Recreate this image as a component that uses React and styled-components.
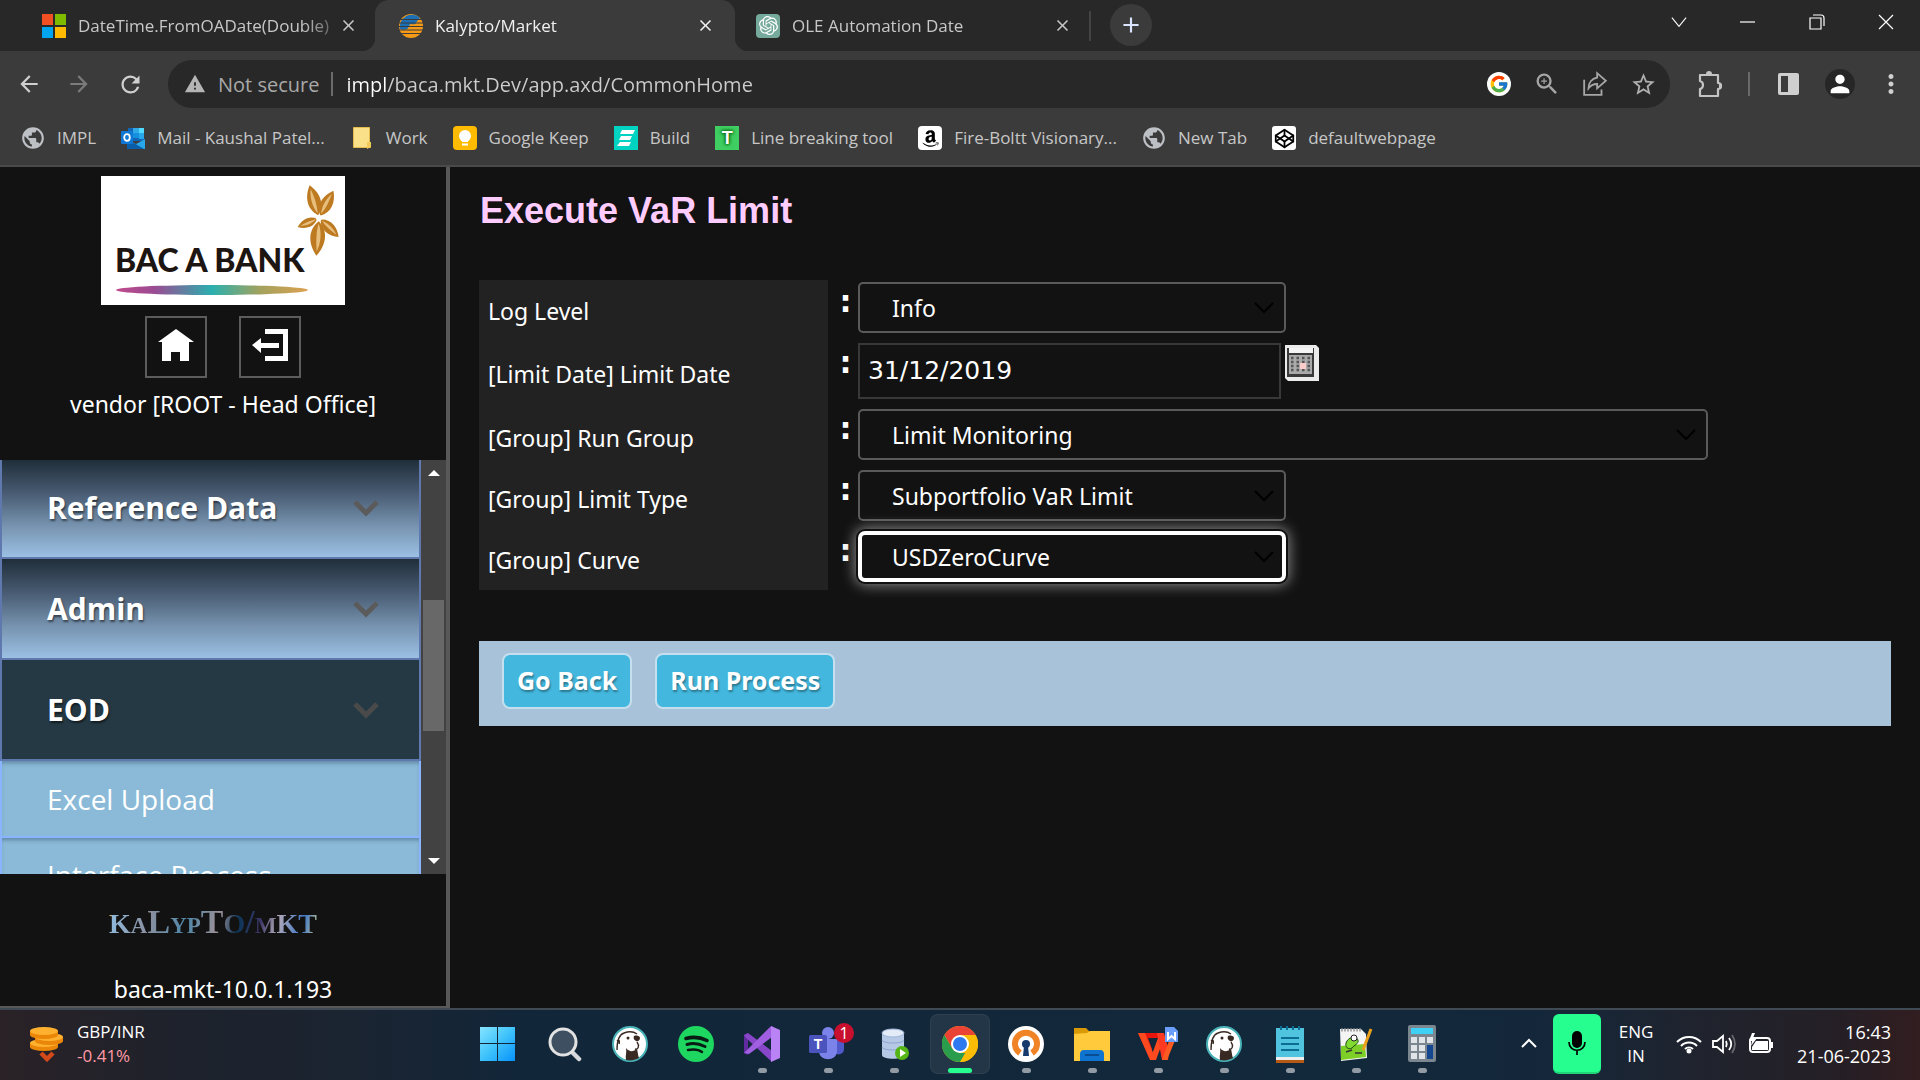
import React from "react";
import styled, { createGlobalStyle, css } from "styled-components";
import {
  MdArrowBack, MdArrowForward, MdRefresh, MdWarning, MdZoomIn, MdStarBorder,
  MdPublic, MdPerson, MdMoreVert, MdClose, MdAdd,
} from "react-icons/md";
import { SiOpenai } from "react-icons/si";
import { FcGoogle } from "react-icons/fc";
import { FaAmazon } from "react-icons/fa";
import { FiCodepen } from "react-icons/fi";

const ui = `"Open Sans", "Noto Sans", sans-serif`;
const app = `"Noto Sans", "Open Sans", sans-serif`;

const GlobalStyle = createGlobalStyle`
  * { box-sizing: border-box; }
  body { margin: 0; background: #121212; overflow: hidden; }
  button, input, select { font: inherit; color: inherit; margin: 0; }
  button { cursor: pointer; }
  svg { display: block; flex: none; }
`;

const Screen = styled.div`
  height: 100vh;
  display: flex;
  flex-direction: column;
  font-family: ${ui};
  color: #fff;
`;

const plainButton = css`
  border: 0;
  padding: 0;
  background: none;
  display: flex;
  align-items: center;
  justify-content: center;
`;

/* ---------- browser ---------- */

const Browser = styled.header`
  background: #3b3b3b;
  border-bottom: 2px solid #4a4a4a;
  color: #c7c7c7;
`;

const TabStrip = styled.div`
  display: flex;
  height: 51px;
  padding-left: 18px;
  background: #282828;
`;

const Tab = styled.div`
  position: relative;
  display: flex;
  align-items: center;
  gap: 12px;
  width: 357px;
  padding: 0 15px 0 24px;
  font-size: 17px;
  ${(p) => p.$active && css`
    width: 360px;
    padding-right: 18px;
    background: #3b3b3b;
    color: #f0f0f0;
    border-radius: 14px 14px 0 0;
    &::before, &::after {
      content: "";
      position: absolute;
      bottom: 0;
      width: 14px;
      height: 14px;
    }
    &::before { left: -14px; background: radial-gradient(circle at 0 0, #282828 14px, #3b3b3b 15px); }
    &::after { right: -14px; background: radial-gradient(circle at 100% 0, #282828 14px, #3b3b3b 15px); }
  `}
  ${(p) => p.$last && css`
    width: 354px;
    padding-left: 21px;
  `}
`;

const TabTitle = styled.span`
  flex: 1;
  min-width: 0;
  margin-right: -10px;
  overflow: hidden;
  white-space: nowrap;
  mask-image: linear-gradient(90deg, #000 88%, rgba(0, 0, 0, 0.3));
`;

const TabClose = styled.button`
  ${plainButton}
  width: 24px;
  height: 24px;
`;

const NewTab = styled.button`
  ${plainButton}
  width: 42px;
  height: 42px;
  margin: 4px 0 0 19px;
  border-radius: 50%;
  background: #3b3b3b;
  color: #dbe4ff;
`;

const TabDivider = styled.i`
  width: 2px;
  height: 30px;
  margin-top: 11px;
  background: #444;
`;

const WindowButtons = styled.div`
  display: flex;
  margin-left: auto;
`;

const WindowButton = styled.button`
  ${plainButton}
  width: 69px;
  height: 43px;
  color: #fff;
`;

const Toolbar = styled.div`
  display: flex;
  align-items: center;
  height: 66px;
  padding: 0 4px;
`;

const ToolButton = styled.button`
  ${plainButton}
  width: ${(p) => p.$w || 50}px;
  height: 48px;
  color: ${(p) => (p.$dim ? "#7b7b7b" : "#d0d0d0")};
`;

const AddressBar = styled.div`
  flex: 1;
  display: flex;
  align-items: center;
  height: 48px;
  margin: 0 14px 0 12px;
  padding: 0 3px 0 16px;
  border-radius: 24px;
  background: #282828;
  font-size: 20px;
`;

const Security = styled.span`
  margin-left: 12px;
  padding-right: 12px;
  color: #a9a9a9;
`;

const AddressInput = styled.input`
  flex: 1;
  min-width: 0;
  border: 0;
  outline: 0;
  padding: 0;
  margin-left: 13px;
  background: linear-gradient(90deg, #fff 40px, #cdcdcd 40px);
  background-clip: text;
  -webkit-text-fill-color: transparent;
`;

const Rule = styled.i`
  width: 2px;
  height: 24px;
  background: #6a6a6a;
`;

const Avatar = styled.span`
  display: flex;
  align-items: center;
  justify-content: center;
  width: 30px;
  height: 30px;
  border-radius: 50%;
  background: #262626;
  color: #fff;
`;

const Bookmarks = styled.nav`
  display: flex;
  align-items: center;
  gap: 1px;
  height: 48px;
  padding: 0 9px 6px;
`;

const Bookmark = styled.a`
  display: flex;
  align-items: center;
  gap: 12px;
  padding: 0 12px;
  color: #c7c7c7;
  font-size: 17px;
  line-height: 24px;
  text-decoration: none;
  white-space: nowrap;
`;

const Favicon = styled.span`
  display: flex;
  align-items: center;
  justify-content: center;
  width: 24px;
  height: 24px;
  border-radius: ${(p) => p.$radius || 0}px;
  background: ${(p) => p.$bg || "none"};
  color: ${(p) => p.$color || "#000"};
  font: 700 18px "Liberation Sans", sans-serif;
  text-shadow: ${(p) => p.$shadow || "none"};
`;

/* ---------- side bar ---------- */

const Body = styled.div`
  flex: 1;
  min-height: 0;
  display: flex;
  background: #121212;
  font-family: ${app};
  font-size: 23px;
`;

const Sidebar = styled.aside`
  flex: none;
  width: 450px;
  display: flex;
  flex-direction: column;
  border-right: 4px solid #585858;
  border-bottom: 2px solid #585858;
`;

const Account = styled.div`
  display: flex;
  flex-direction: column;
  align-items: center;
  height: 293px;
  padding-top: 9px;
`;

const BankLogo = styled.div`
  position: relative;
  width: 244px;
  height: 129px;
  background: #fff;
`;

const BankArt = styled.svg`
  position: absolute;
  inset: 0;
`;

const BankName = styled.span`
  position: absolute;
  left: 14px;
  top: 62px;
  color: #1d1512;
  font: 900 32px/44px Lato, "Liberation Sans", sans-serif;
  white-space: nowrap;
`;

const QuickLinks = styled.div`
  display: flex;
  gap: 32px;
  margin: 11px 0 10px;
`;

const QuickButton = styled.button`
  ${plainButton}
  width: 62px;
  height: 62px;
  padding-bottom: 4px;
  border: 2px solid #5c5c5c;
`;

const AccountName = styled.div`
  line-height: 32px;
  white-space: nowrap;
`;

const MenuArea = styled.div`
  flex: 1;
  min-height: 0;
  display: flex;
`;

const Menu = styled.nav`
  flex: 1;
  overflow: hidden;
`;

const MenuHead = styled.button`
  display: flex;
  align-items: center;
  justify-content: space-between;
  width: 100%;
  height: ${(p) => (p.$first ? 99 : 101)}px;
  padding: 0 40px ${(p) => (p.$first ? 2 : 0)}px 45px;
  border: 2px solid #5f79ae;
  border-top: 0;
  background: ${(p) => (p.$open ? "#253944" : "linear-gradient(#202e3a, #485b72 34%, #7793af 68%, #9bc0e4)")};
  color: ${(p) => (p.$open ? "#4a4a4a" : "#5b5b5b")};
  font-family: ${ui};
  font-size: 30px;
  font-weight: 700;
`;

const MenuLabel = styled.span`
  color: #fff;
  text-shadow: 1px 2px 2px rgba(0, 0, 0, 0.5);
`;

const MenuLink = styled.a`
  display: flex;
  align-items: center;
  height: ${(p) => (p.$first ? 77 : 76)}px;
  padding-left: 45px;
  border: 2px solid #8ab4ff;
  border-top: 0;
  background: #8abad7;
  box-shadow: inset 0 4px 4px -2px rgba(50, 80, 110, 0.5);
  color: #fff;
  font-family: ${ui};
  font-size: 28px;
  text-decoration: none;
`;

const ScrollTrack = styled.div`
  display: flex;
  flex-direction: column;
  align-items: center;
  width: 25px;
  padding: 10px 0;
  background: #424242;
`;

const ScrollThumb = styled.div`
  width: 21px;
  height: 131px;
  margin: 124px 0 auto;
  background: #686868;
`;

const Product = styled.footer`
  display: flex;
  flex-direction: column;
  align-items: center;
  height: 132px;
  padding-top: 26px;
  line-height: 32px;
`;

const Wordmark = styled.div`
  display: flex;
  align-items: baseline;
  height: 44px;
  margin: 0 20px 29px 0;
  background: linear-gradient(100deg, #ffb020 1%, #8fb8d8 3%, #8a8fa0 20%, #4f87a8 38%, #9b9098 52%, #0d3558 62%, #3b3565 72%, #b0a8b8 80%, #3f78c8 92%, #cfc98a);
  background-clip: text;
  color: transparent;
  font: 700 28px/44px "Liberation Serif", serif;
`;

const Letter = styled.span`
  font-size: ${(p) => (p.$size === "l" ? 34 : p.$size === "s" ? 23 : 28)}px;
`;

/* ---------- main form ---------- */

const Main = styled.main`
  flex: 1;
  min-width: 0;
  padding: 20px 29px;
`;

const Title = styled.h1`
  margin: 0 0 46px;
  padding-left: 1px;
  color: #ffccff;
  font: 700 36px/47px "Liberation Sans", Arial, sans-serif;
`;

const FormRow = styled.div`
  display: flex;
  height: ${(p) => (p.$tall ? 66 : 61)}px;
`;

const Label = styled.label`
  display: flex;
  align-items: center;
  width: 349px;
  padding-left: 9px;
  background: #222;
`;

const Colon = styled.b`
  width: 30px;
  padding: 6px 0 0 5px;
  text-align: center;
  font: 700 30px/32px "DejaVu Sans", sans-serif;
`;

const SelectBox = styled.div`
  position: relative;
  width: ${(p) => (p.$wide ? 850 : 428)}px;
  height: 51px;
  margin-top: 2px;
`;

const Select = styled.select`
  appearance: none;
  width: 100%;
  height: 100%;
  padding: 0 60px 0 32px;
  border: 2px solid #5a5a5a;
  border-radius: 5px;
  outline: 0;
  background: #121212;
  ${(p) => p.$focused && css`
    padding: 0 60px 0 30px;
    border: 4px solid #fff;
    border-radius: 7px;
    box-shadow: 0 0 0 2px #101010, 0 0 14px 3px #8a8a8a;
  `}
`;

const SelectArrow = styled.svg`
  position: absolute;
  right: 12px;
  top: 20px;
  pointer-events: none;
`;

const DateInput = styled.input`
  width: 423px;
  height: 56px;
  margin-top: 2px;
  padding: 0 8px 2px;
  border: 2px solid #383838;
  outline: 0;
  background: #121212;
  font-family: "DejaVu Sans", sans-serif;
  font-size: 25px;
`;

const CalendarButton = styled.button`
  ${plainButton}
  width: 34px;
  height: 36px;
  margin: 4px 0 0 4px;
`;

const Actions = styled.div`
  display: flex;
  gap: 23px;
  height: 85px;
  margin-top: 51px;
  padding: 12px 23px;
  background: #a8c2d9;
`;

const ActionButton = styled.button`
  height: 56px;
  padding: 0 13px 2px;
  border: 2px solid #c5dfee;
  border-radius: 8px;
  background: #43b7dd;
  font-size: 25px;
  font-weight: 700;
  text-shadow: 1px 2px 2px rgba(0, 0, 0, 0.35);
  white-space: nowrap;
`;

/* ---------- task bar ---------- */

const Taskbar = styled.footer`
  display: grid;
  grid-template-columns: 1fr auto 1fr;
  height: 72px;
  border-top: 2px solid #3f4a54;
  background: linear-gradient(90deg, #2a2227, #1d222c 10%, #1b2431 18%, #122639 27%, #12283b 70%, #14273a 80%, #20232d 89%, #251f25 96%, #321d20);
  font-size: 17px;
  line-height: 24px;
`;

const Widget = styled.button`
  ${plainButton}
  justify-content: flex-start;
  gap: 12px;
  padding: 0 0 3px 29px;
  text-align: left;
`;

const Fall = styled.div`
  color: #ff99a4;
`;

const Dock = styled.div`
  display: flex;
  align-items: center;
  gap: 6px;
`;

const DockButton = styled.button`
  ${plainButton}
  position: relative;
  width: 60px;
  height: 60px;
  border-radius: 8px;
  margin-bottom: 2px;
  ${(p) => p.$state === "active" && css`
    background: #233647;
    box-shadow: inset 0 0 0 1px #2e4050;
  `}
  ${(p) => p.$state && css`
    &::after {
      content: "";
      position: absolute;
      bottom: 1px;
      width: ${p.$state === "active" ? 24 : 9}px;
      height: 5px;
      border-radius: 3px;
      background: ${p.$state === "active" ? "#26ff8f" : "#929ba4"};
    }
  `}
`;

const Tray = styled.div`
  display: flex;
  align-items: center;
  justify-content: flex-end;
  padding: 0 29px 2px 0;
`;

const TrayButton = styled.button`
  ${plainButton}
  width: ${(p) => p.$w}px;
  height: 60px;
`;

const MicButton = styled.button`
  ${plainButton}
  width: 48px;
  height: 60px;
  border-radius: 6px;
  background: #26ff8f;
  border-bottom: 2px solid #20d478;
`;

const Clock = styled.div`
  width: 112px;
  font-size: 18px;
  text-align: right;
  white-space: nowrap;
`;

/* ---------- drawings ---------- */

const MicrosoftLogo = () => (
  <svg width="24" height="24"><path fill="#f25022" d="M0 0h11v11H0z" /><path fill="#7fba00" d="M13 0h11v11H13z" /><path fill="#00a4ef" d="M0 13h11v11H0z" /><path fill="#ffb900" d="M13 13h11v11H13z" /></svg>
);

const KalyptoLogo = () => (
  <svg width="24" height="24" viewBox="0 0 24 24">
    <circle cx="12" cy="12" r="12" fill="#f59a17" />
    <path fill="#1b6fb5" d="M1 15a12 12 0 0 1 20-11c-2 2-3 3-4 5s-3 1-5 1-2 4-4 5-5 1-7 0z" />
    <path stroke="#3b3b3b" strokeWidth="1" d="M0 5.500h24M0 9h24M0 12.500h24M0 16h24M0 19.500h24" />
  </svg>
);

const OutlookLogo = () => (
  <svg width="24" height="24" viewBox="0 0 24 24">
    <path fill="#1066b8" d="M7 2h16v13H7z" /><path fill="#32a9e7" d="M12 2h6v5h-6z" /><path fill="#50d9ff" d="M18 2h5v5h-5z" />
    <path fill="#1490df" d="M12 7h6v5h-6z" /><path fill="#28a8ea" d="M18 7h5v6h-5zM6 13l9 5 9-5v10H6z" /><path fill="#0a5ea8" d="M6 13l17 10H6z" />
    <rect y="5" width="12" height="13" rx="1" fill="#0f78d4" /><ellipse cx="6" cy="11.500" rx="2.800" ry="3.300" fill="none" stroke="#fff" strokeWidth="1.800" />
  </svg>
);

const NoteFolder = () => (
  <svg width="24" height="24"><path fill="#fbe08a" stroke="#e5bd4f" d="M3.500 1.500h16v15l1 1v4h-17z" /><path fill="#f0c95a" d="M17 16h4v5l-4 2z" /></svg>
);

const KeepLogo = () => (
  <svg width="24" height="24"><rect width="24" height="24" rx="4" fill="#fb0" /><circle cx="12" cy="10" r="6" fill="#fff" /><path fill="#fff" d="M9 13h6v3H9zM9 17.500h6v2H9z" /></svg>
);

const BuildLogo = () => (
  <svg width="24" height="24"><path fill="#00d3c2" d="M0 0h24v24H0z" /><path fill="#fff" d="M8 4h13l-2 4H6zM7 10h11l-2 4H5zM6 16h11l-2 4H3z" /></svg>
);

const ShareIcon = () => (
  <svg width="26" height="26" viewBox="0 0 24 24" fill="none" stroke="#a6a6a6" strokeWidth="1.700"><path d="M2 8v14h16v-5M14 6V2l8 7-8 7v-4c-4 0-6 1-8 4 0-5 3-9 8-10z" /></svg>
);

const PuzzleIcon = () => (
  <svg width="26" height="28" viewBox="0 0 26 28" fill="none" stroke="#c4c4c4" strokeWidth="2.200"><path d="M3 5h18v8c4 0 4 6 0 6v7H3v-7c4-1 4-7 0-8z" strokeLinejoin="round" /><path fill="#c4c4c4" stroke="none" d="M9 4a3 3 0 0 1 6 0zM22 13a3 3 0 0 1 0 6z" /></svg>
);

const SidePanelIcon = () => (
  <svg width="21" height="22"><rect width="21" height="22" rx="2" fill="#cfcfcf" /><path fill="#3b3b3b" d="M3 3h7v16H3z" /></svg>
);

const Petal = ({ turn, size }) => (
  <g transform={`rotate(${turn}) scale(${size})`}>
    <path fill="#bd7a20" d="M0-3C-10-12-8-25 0-35 8-25 10-12 0-3z" />
    <path fill="#e8be7c" d="M0-5C-4-14-3-24 0-31 1-24 2-14 0-5z" />
  </g>
);

const BankDrawing = () => (
  <BankArt width="244" height="129" viewBox="0 0 244 129" aria-hidden="true">
    <defs>
      <linearGradient id="wave"><stop stopColor="#c04a8c" /><stop offset=".2" stopColor="#9a4b93" /><stop offset=".5" stopColor="#2bb0ae" /><stop offset=".75" stopColor="#a2a25e" /><stop offset="1" stopColor="#dca050" /></linearGradient>
    </defs>
    <ellipse cx="111" cy="114" rx="96" ry="5" fill="url(#wave)" />
    <g transform="translate(218 42)">
      <Petal turn={-16} size={0.97} />
      <Petal turn={28} size={0.88} />
      <Petal turn={134} size={0.78} />
      <Petal turn={184} size={1.08} />
      <Petal turn={247} size={0.66} />
      <circle r="3" fill="#fff" />
    </g>
  </BankArt>
);

const HomeIcon = () => (
  <svg width="36" height="34" viewBox="0 0 36 34"><path fill="#fff" d="M18 1L0 14h4v19h9v-9h9v9h9V14h5z" /></svg>
);

const ExitIcon = () => (
  <svg width="36" height="34" viewBox="0 0 36 34"><path fill="#fff" d="M13 1h23v32H13v-5h18V6H13zM0 17l9-7v5h18v5H9v5z" /></svg>
);

const MenuChevron = () => (
  <svg width="26" height="18" fill="none" stroke="currentColor" strokeWidth="5"><path d="M2 3l11 11L24 3" /></svg>
);

const Triangle = ({ down }) => (
  <svg width="12" height="6" fill="#fff"><path d={down ? "M0 0h12L6 6z" : "M0 6h12L6 0z"} /></svg>
);

const CalendarIcon = () => (
  <svg width="34" height="36" viewBox="0 0 34 36">
    <path fill="#ececec" d="M0 0h31l3 3v33H3l-3-3z" /><path fill="#3a3a3a" d="M2 3h27v29H2z" /><path fill="#f4f4f4" d="M4 3h24v5H4z" /><path fill="#aaa" d="M4 10h23v19H4z" />
    <path stroke="#555" strokeWidth="2.500" strokeDasharray="2.500 3" d="M6 13h19M6 17h19M6 21h19M6 25h19" /><path fill="#fcc" d="M15 18h6v6h-6z" />
  </svg>
);

const CoinsIcon = () => (
  <svg width="36" height="36" viewBox="0 0 36 36">
    {[[15, 17], [20, 11], [15, 5]].map(([x, y]) => (
      <g key={y}><path fill="#ea8608" d={`M${x - 14} ${y}v4a14 4 0 0 0 28 0v-4z`} /><ellipse cx={x} cy={y} rx="14" ry="4" fill="#ffb02e" /></g>
    ))}
    <path d="M12 27l6 6 6-6" fill="none" stroke="#d4491a" strokeWidth="4.500" />
  </svg>
);

const StartIcon = () => (
  <svg width="36" height="36"><defs><linearGradient id="win" x2="1" y2="1"><stop stopColor="#86e4ff" /><stop offset=".5" stopColor="#3fc3fb" /><stop offset="1" stopColor="#0792fb" /></linearGradient></defs><path fill="url(#win)" d="M0 1h17v16H0zM18 1h17v16H18zM0 18h17v17H0zM18 18h17v17H18z" /></svg>
);

const SearchIcon = () => (
  <svg width="36" height="36"><path stroke="#d5d9de" strokeWidth="4.500" strokeLinecap="round" d="M25 25l8 8" /><circle cx="17" cy="16" r="13" fill="#3d4f60" stroke="#e2e2e2" strokeWidth="3" /></svg>
);

const BeaverIcon = () => (
  <svg width="36" height="36" viewBox="0 0 36 36">
    <circle cx="18" cy="18" r="17" fill="#fff" stroke="#49b3b8" strokeWidth="2" />
    <path fill="#382923" d="M14 34c-1-4 1-8 0-12 3 4 7 4 11 1 1 4 1 7 2 9-4 2-8 3-13 2zM22 10c3-1 6 0 6 2s-2 4-4 3-3-3-2-5z" />
    <circle cx="16" cy="12" r="1.500" fill="#382923" />
    <path fill="none" stroke="#382923" strokeWidth="1.400" d="M5 24c0-7 1-15 7-17 5-2 9-2 13 1M5 15c2-2 3 0 2 3M25 16c3 4 1 8-2 7" />
  </svg>
);

const SpotifyIcon = () => (
  <svg width="36" height="36" fill="none" stroke="#081b14" strokeLinecap="round"><circle cx="18" cy="18" r="18" fill="#1ed760" stroke="none" /><path strokeWidth="3.600" d="M8 12.500c7-2 15-1 21 2" /><path strokeWidth="3" d="M9 18.500c6-2 12-1 18 2" /><path strokeWidth="2.500" d="M10 24c5-1 10-1 14 2" /></svg>
);

const VisualStudioIcon = () => (
  <svg width="36" height="36"><path fill="#622aa0" d="M0 9l4-2v22l-4-2z" /><path fill="#8747c8" d="M0 9l4-2 24 18v11L2 12z" /><path fill="#a05fe0" d="M28 0v11L5 28l-5-1L26 1z" /><path fill="#b983f5" d="M27 0l9 4v28l-9 4z" /></svg>
);

const TeamsIcon = () => (
  <svg width="56" height="48" viewBox="0 0 56 48">
    <circle cx="28" cy="13" r="6" fill="#7b83eb" /><path fill="#5059c9" d="M34 19h10v10c0 5-6 7-9 4z" /><path fill="#7b83eb" d="M19 19h18v12c0 11-18 11-18 0z" />
    <rect x="9" y="15" width="18" height="18" rx="1.500" fill="#4b53bc" />
    <text x="18" y="29" textAnchor="middle" fill="#fff" fontFamily="Liberation Sans" fontWeight="700" fontSize="14">T</text>
    <circle cx="44" cy="13" r="10" fill="#c8102e" /><text x="44" y="19" textAnchor="middle" fill="#fff" fontFamily="Open Sans" fontSize="16">1</text>
  </svg>
);

const DatabaseIcon = () => (
  <svg width="32" height="36" viewBox="0 0 32 36"><path fill="#b5c8e6" d="M4 7v22c0 5 22 5 22 0V7z" /><path fill="none" stroke="#8da6ce" d="M4 14c0 4 22 4 22 0M4 21c0 4 22 4 22 0" /><ellipse cx="15" cy="7" rx="11" ry="4" fill="#e3ebf7" stroke="#9fb6d9" /><circle cx="24" cy="27" r="7" fill="#55b516" /><path fill="#fff" d="M22 23l6 4-6 4z" /></svg>
);

const ChromeIcon = () => (
  <svg width="36" height="36" viewBox="0 0 36 36"><circle cx="18" cy="18" r="18" fill="#fbbc05" /><path fill="#ea4335" d="M2.400 9A18 18 0 0 1 33.600 9H18l-7.800 13.500z" /><path fill="#2a9d4c" d="M2.400 9l7.800 13.500L18 27h7.800L18 36A18 18 0 0 1 2.400 9z" /><path fill="#fbbc05" d="M25.800 22.500L18 36A18 18 0 0 0 33.600 9H18z" /><circle cx="18" cy="18" r="9" fill="#fff" /><circle cx="18" cy="18" r="7" fill="#2f79f0" /></svg>
);

const VpnIcon = () => (
  <svg width="36" height="36"><circle cx="18" cy="18" r="18" fill="#fff" /><path fill="none" stroke="#f08326" strokeWidth="6" d="M12 27a11 11 0 1 1 12 0" /><circle cx="18" cy="18" r="4" fill="#153a6b" /><path fill="#153a6b" d="M16 20h4l1 10h-6z" /></svg>
);

const ExplorerIcon = () => (
  <svg width="36" height="36"><path fill="#d99a06" d="M0 2h12l4 4v7H0z" /><path fill="#ffcb3c" d="M0 8l13-1 3-2h20v30H0z" /><path fill="#0e74cf" d="M6 35v-7q0-4 4-4h16q4 0 4 4v7z" /><path stroke="#0a4c92" strokeWidth="2" d="M11 29h14" /></svg>
);

const WpsIcon = () => (
  <svg width="40" height="38" viewBox="0 0 40 38"><path fill="#e8150c" d="M0 8h23l-2 5H10l4 11-2 10z" /><path fill="#ff4a20" d="M12 35l8-22h6l-8 22zM0 8h7l11 27h-6z" /><path fill="#ff3a20" d="M19 8h7l5 18-1 9h-6z" /><path fill="#ff5a20" d="M24 35l8-22h6l-9 22z" /><path fill="#6b9dfb" d="M27 2h9l4 4v11H27z" /><path fill="none" stroke="#fff" strokeWidth="2" d="M30 7v7l3.500-3 3.500 3V7" /></svg>
);

const NotepadIcon = () => (
  <svg width="28" height="38" viewBox="0 0 28 38"><path fill="#b45a14" d="M0 33h28v5H0z" /><path fill="#eee" d="M0 31h28v4H0z" /><path fill="#50c3df" d="M0 3h28v29H0z" /><path stroke="#0b6d93" strokeWidth="2" d="M5 13h18M5 19h18M5 25h18M5 1v4M11 1v4M17 1v4M23 1v4" /></svg>
);

const NotepadPlusIcon = () => (
  <svg width="36" height="36" viewBox="0 0 36 36"><path fill="#f4f4f4" d="M2 3h21l5 5 1 24-26 3z" /><path fill="#7dcf28" d="M3 20l24-2 1 13-25 3z" /><path fill="#82db32" stroke="#204a12" d="M8 17c2-6 10-8 12-3 1 4-4 5-6 8-4 2-7-1-6-5z" /><circle cx="16" cy="12" r="3" fill="#fff" stroke="#222" /><path stroke="#aaa" d="M3 4h20" strokeWidth="3" strokeDasharray="2 1" /><path stroke="#eba01c" strokeWidth="3" d="M33 3l-8 21" /><path stroke="#333" d="M8 26l6-2M17 27h7" strokeWidth="1.500" /></svg>
);

const CalculatorIcon = () => (
  <svg width="28" height="38" viewBox="0 0 28 38"><rect width="28" height="37" rx="2" fill="#7b868f" /><path fill="#3fd0f6" d="M3 3h22v6H3z" /><path fill="#e0e4e9" d="M3 12h6v6H3zM11 12h6v6h-6zM19 12h6v6h-6zM3 20h6v6H3zM11 20h6v6h-6zM3 28h6v6H3zM11 28h6v6h-6z" /><path fill="#14478f" d="M19 20h6v14h-6z" /></svg>
);

const MicIcon = () => (
  <svg width="18" height="26" viewBox="0 0 18 26"><rect x="4" y="1" width="10" height="17" rx="5" fill="#000" /><path fill="none" stroke="#000" strokeWidth="1.700" d="M1 12c0 11 16 11 16 0M9 20v5" /></svg>
);

const WifiIcon = () => (
  <svg width="26" height="20" fill="none" stroke="#fff" strokeWidth="2"><path d="M1 8a17 17 0 0 1 24 0M5 12a11 11 0 0 1 16 0M9 15a6 6 0 0 1 8 0" /><circle cx="13" cy="17" r="1.500" fill="#fff" /></svg>
);

const SpeakerIcon = () => (
  <svg width="26" height="22" fill="none" stroke="#fff" strokeWidth="1.800"><path d="M1 8v6h4l6 5V3L5 8zM14 8c1 2 1 4 0 6M17 5c3 4 3 8 0 12" /><path stroke="#66666c" d="M20 2c4 6 4 12 0 18" /></svg>
);

const BatteryIcon = () => (
  <svg width="26" height="22"><rect x="2" y="5" width="20" height="14" rx="3" fill="none" stroke="#fff" strokeWidth="2" /><path fill="#fff" d="M8 8h12v9H4v-3zM23 9h2v6h-2zM4 0l-3 8h3l-1 5 6-8H5l2-5z" /></svg>
);

const Stroke = ({ size = 18, d, weight = 1.2 }) => (
  <svg width={size} height={size} viewBox="0 0 18 18" fill="none" stroke="#fff" strokeWidth={weight}><path d={d} /></svg>
);

/* ---------- data ---------- */

const bookmarks = [
  { label: "IMPL", icon: <MdPublic size={26} color="#bdc1c6" /> },
  { label: "Mail - Kaushal Patel...", icon: <OutlookLogo /> },
  { label: "Work", icon: <NoteFolder /> },
  { label: "Google Keep", icon: <KeepLogo /> },
  { label: "Build", icon: <BuildLogo /> },
  { label: "Line breaking tool", icon: "T", bg: "#3fce62", color: "#fff", shadow: "0 0 3px #0b6b12, 0 0 3px #0b6b12, 0 0 4px #0b6b12" },
  { label: "Fire-Boltt Visionary...", icon: <FaAmazon size={19} />, bg: "#fff", radius: 4 },
  { label: "New Tab", icon: <MdPublic size={26} color="#bdc1c6" /> },
  { label: "defaultwebpage", icon: <FiCodepen size={21} />, bg: "#fff", radius: 3 },
];

const fields = [
  { id: "log", label: "Log Level", value: "Info" },
  { id: "date", label: "[Limit Date] Limit Date", value: "31/12/2019", date: true },
  { id: "group", label: "[Group] Run Group", value: "Limit Monitoring", wide: true },
  { id: "type", label: "[Group] Limit Type", value: "Subportfolio VaR Limit" },
  { id: "curve", label: "[Group] Curve", value: "USDZeroCurve", focused: true },
];

const dock = [
  ["Start", StartIcon], ["Search", SearchIcon], ["DBeaver", BeaverIcon], ["Spotify", SpotifyIcon],
  ["Visual Studio", VisualStudioIcon, "open"], ["Teams", TeamsIcon, "open"], ["Database", DatabaseIcon, "open"],
  ["Chrome", ChromeIcon, "active"], ["OpenVPN", VpnIcon, "open"], ["Explorer", ExplorerIcon, "open"],
  ["WPS", WpsIcon, "open"], ["DBeaver 2", BeaverIcon, "open"], ["Notepad", NotepadIcon, "open"],
  ["Notepad++", NotepadPlusIcon, "open"], ["Calculator", CalculatorIcon, "open"],
];

const wordmark = [["K"], ["A", "s"], ["L", "l"], ["Y", "s"], ["P", "s"], ["T", "l"], ["O"], ["/", "l"], ["M", "s"], ["K"], ["T"]];

function BrowserTab({ icon, title, active, last }) {
  return (
    <Tab $active={active} $last={last}>
      {icon}
      <TabTitle>{title}</TabTitle>
      <TabClose aria-label={`Close ${title}`}><MdClose size={19} /></TabClose>
    </Tab>
  );
}

function Field({ id, label, value, date, wide, focused }) {
  return (
    <FormRow $tall={date}>
      <Label htmlFor={id}>{label}</Label>
      <Colon>:</Colon>
      {date ? (
        <>
          <DateInput id={id} defaultValue={value} />
          <CalendarButton aria-label="Pick a date"><CalendarIcon /></CalendarButton>
        </>
      ) : (
        <SelectBox $wide={wide}>
          <Select id={id} $focused={focused} defaultValue={value}><option>{value}</option></Select>
          <SelectArrow width="20" height="12" fill="none" stroke="#000" strokeWidth="2"><path d="M1 1l9 9 9-9" /></SelectArrow>
        </SelectBox>
      )}
    </FormRow>
  );
}

export default function App() {
  return (
    <Screen>
      <GlobalStyle />
      <Browser>
        <TabStrip>
          <BrowserTab icon={<MicrosoftLogo />} title="DateTime.FromOADate(Double)" />
          <BrowserTab icon={<KalyptoLogo />} title="Kalypto/Market" active />
          <BrowserTab icon={<Favicon $bg="#75a99c" $radius={4} $color="#fff"><SiOpenai size={19} /></Favicon>} title="OLE Automation Date" last />
          <TabDivider />
          <NewTab aria-label="New tab"><MdAdd size={26} /></NewTab>
          <WindowButtons>
            <WindowButton aria-label="Search tabs"><Stroke size={16} d="M1 4l8 10 8-10" /></WindowButton>
            <WindowButton aria-label="Minimize"><Stroke d="M1 9h15" /></WindowButton>
            <WindowButton aria-label="Restore"><Stroke d="M2 5h11v11H2zM5 2h8q3 0 3 3v8" /></WindowButton>
            <WindowButton aria-label="Close window"><Stroke d="M2 2l14 14M16 2L2 16" /></WindowButton>
          </WindowButtons>
        </TabStrip>
        <Toolbar>
          <ToolButton aria-label="Back"><MdArrowBack size={26} /></ToolButton>
          <ToolButton $dim aria-label="Forward"><MdArrowForward size={26} /></ToolButton>
          <ToolButton $w={52} aria-label="Reload"><MdRefresh size={27} /></ToolButton>
          <AddressBar>
            <MdWarning size={22} color="#b5b5b5" />
            <Security>Not secure</Security>
            <Rule />
            <AddressInput aria-label="Address" defaultValue="impl/baca.mkt.Dev/app.axd/CommonHome" />
            <ToolButton $w={48} aria-label="Google"><Favicon $bg="#fff" $radius={12}><FcGoogle size={20} /></Favicon></ToolButton>
            <ToolButton $w={48} aria-label="Zoom"><MdZoomIn size={28} color="#a6a6a6" /></ToolButton>
            <ToolButton $w={48} aria-label="Share"><ShareIcon /></ToolButton>
            <ToolButton $w={48} aria-label="Bookmark"><MdStarBorder size={27} color="#b0b0b0" /></ToolButton>
          </AddressBar>
          <ToolButton $w={52} aria-label="Extensions"><PuzzleIcon /></ToolButton>
          <ToolButton $w={26} aria-hidden="true"><Rule /></ToolButton>
          <ToolButton $w={52} aria-label="Side panel"><SidePanelIcon /></ToolButton>
          <ToolButton $w={52} aria-label="Profile"><Avatar><MdPerson size={28} /></Avatar></ToolButton>
          <ToolButton aria-label="More"><MdMoreVert size={30} /></ToolButton>
        </Toolbar>
        <Bookmarks>
          {bookmarks.map((b) => (
            <Bookmark key={b.label} href="#">
              <Favicon $bg={b.bg} $radius={b.radius} $color={b.color} $shadow={b.shadow}>{b.icon}</Favicon>
              {b.label}
            </Bookmark>
          ))}
        </Bookmarks>
      </Browser>

      <Body>
        <Sidebar>
          <Account>
            <BankLogo><BankDrawing /><BankName>BAC A BANK</BankName></BankLogo>
            <QuickLinks>
              <QuickButton aria-label="Home"><HomeIcon /></QuickButton>
              <QuickButton aria-label="Log out"><ExitIcon /></QuickButton>
            </QuickLinks>
            <AccountName>vendor [ROOT - Head Office]</AccountName>
          </Account>
          <MenuArea>
            <Menu>
              <MenuHead $first><MenuLabel>Reference Data</MenuLabel><MenuChevron /></MenuHead>
              <MenuHead><MenuLabel>Admin</MenuLabel><MenuChevron /></MenuHead>
              <MenuHead $open><MenuLabel>EOD</MenuLabel><MenuChevron /></MenuHead>
              <MenuLink $first href="#">Excel Upload</MenuLink>
              <MenuLink href="#">Interface Process</MenuLink>
            </Menu>
            <ScrollTrack><Triangle /><ScrollThumb /><Triangle down /></ScrollTrack>
          </MenuArea>
          <Product>
            <Wordmark>{wordmark.map(([c, s], i) => <Letter key={i} $size={s}>{c}</Letter>)}</Wordmark>
            baca-mkt-10.0.1.193
          </Product>
        </Sidebar>
        <Main>
          <Title>Execute VaR Limit</Title>
          {fields.map((f) => <Field key={f.id} {...f} />)}
          <Actions>
            <ActionButton>Go Back</ActionButton>
            <ActionButton>Run Process</ActionButton>
          </Actions>
        </Main>
      </Body>

      <Taskbar>
        <Widget>
          <CoinsIcon />
          <div>GBP/INR<Fall>-0.41%</Fall></div>
        </Widget>
        <Dock>
          {dock.map(([name, Icon, state]) => (
            <DockButton key={name} aria-label={name} $state={state}><Icon /></DockButton>
          ))}
        </Dock>
        <Tray>
          <TrayButton $w={48} aria-label="Hidden icons"><Stroke d="M2 12l7-7 7 7" weight={2} /></TrayButton>
          <MicButton aria-label="Microphone"><MicIcon /></MicButton>
          <TrayButton $w={70}><span>ENG<br />IN</span></TrayButton>
          <TrayButton $w={36} aria-label="Network"><WifiIcon /></TrayButton>
          <TrayButton $w={36} aria-label="Volume"><SpeakerIcon /></TrayButton>
          <TrayButton $w={36} aria-label="Battery"><BatteryIcon /></TrayButton>
          <Clock>16:43<br />21-06-2023</Clock>
        </Tray>
      </Taskbar>
    </Screen>
  );
}
